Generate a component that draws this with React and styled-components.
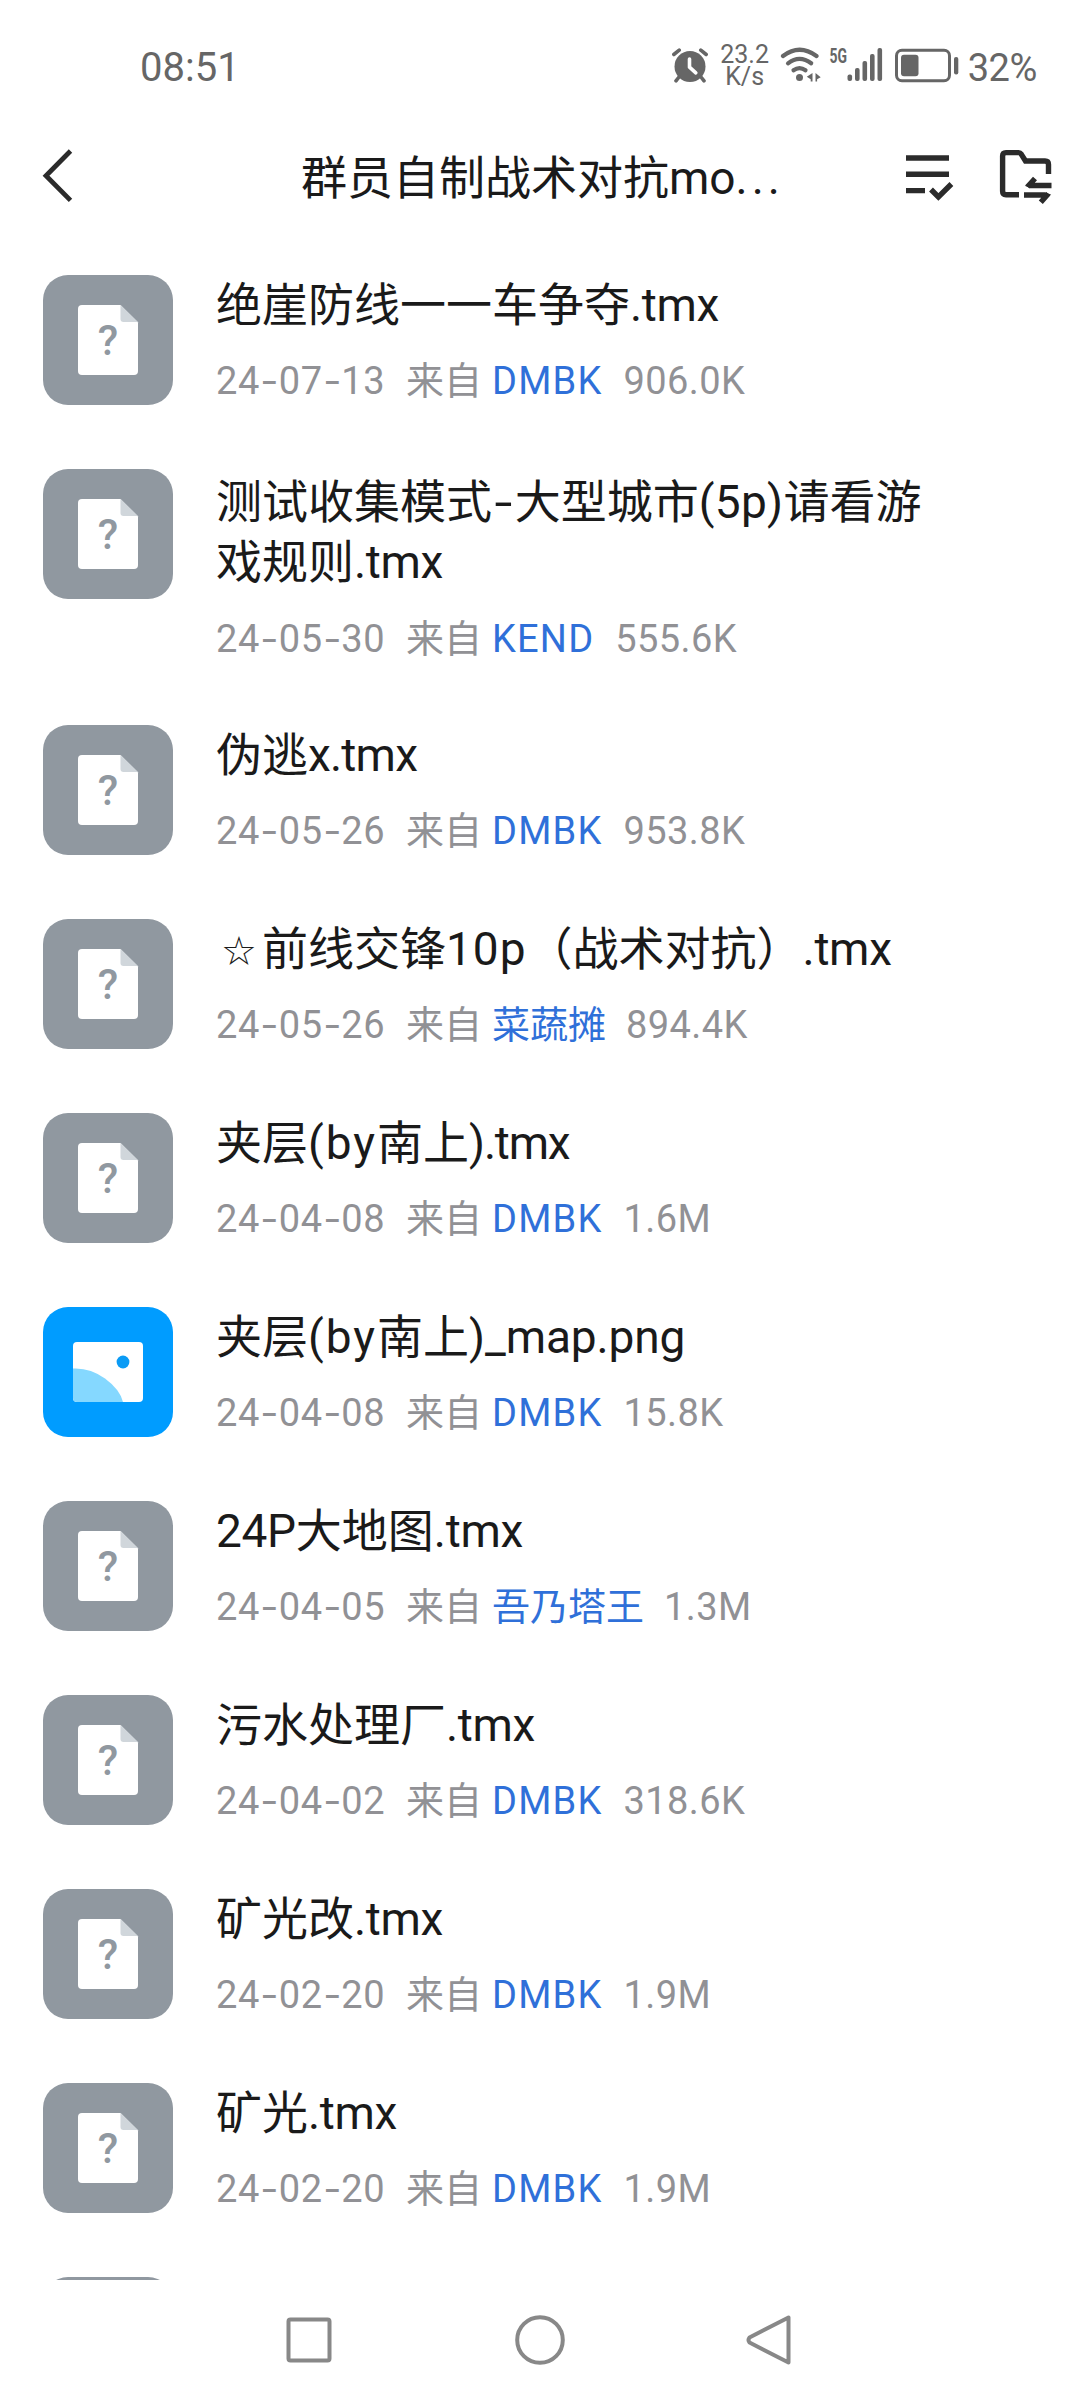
import React from 'react';
import styled, { createGlobalStyle } from 'styled-components';

const GlobalStyle = createGlobalStyle`
	* {
		box-sizing: border-box;
	}
	body {
		margin: 0;
		background: #fff;
		font-family: Roboto, 'Noto Sans CJK SC', sans-serif;
	}
`;

const Screen = styled.div`
	width: 1080px;
	height: 2400px;
	display: flex;
	flex-direction: column;
	overflow: hidden;
	background: #fff;
`;

const StatusBar = styled.div`
	height: 131px;
	display: flex;
	align-items: flex-start;
	justify-content: space-between;
	padding: 43px 43px 0 140px;
	color: #666;
`;

const Clock = styled.div`
	font-size: 40px;
	line-height: 50px;
`;

const StatusIcons = styled.div`
	display: flex;
	align-items: flex-start;
	height: 48px;
`;

const NetSpeed = styled.div`
	width: 50px;
	margin: 1px 10px 0 12px;
	font-size: 25px;
	line-height: 22px;
	text-align: center;
`;

const Percent = styled.div`
	margin-left: 9px;
	font-size: 38px;
	line-height: 50px;
	letter-spacing: -0.4px;
`;

const Header = styled.div`
	height: 113px;
	display: flex;
	align-items: flex-start;
	padding: 12px 27px 0 36px;
`;

const HeaderTitle = styled.h1`
	flex: 1;
	margin: 5px 0 0;
	padding-left: 221px;
	font-size: 46px;
	line-height: 60px;
	font-weight: 400;
	color: #1a1a1a;
	white-space: nowrap;
`;

const Ellipsis = styled.span`
	letter-spacing: 4px;
`;

const HeaderActions = styled.div`
	display: flex;
	gap: 34px;
`;

const List = styled.div`
	flex: 0 0 2036px;
	overflow: hidden;
`;

const Row = styled.div`
	display: flex;
	align-items: flex-start;
	height: ${(p) => (p.$wrapped ? 256 : 194)}px;
	padding: 31px 43px 0;
`;

const RowBody = styled.div`
	width: 724px;
	margin-left: 43px;
	padding-top: ${(p) => (p.$wrapped ? 3 : 0)}px;
`;

const FileName = styled.div`
	font-size: 46px;
	line-height: 60px;
	color: #1a1a1a;
`;

const Latin = styled.span`
	letter-spacing: ${(p) => p.$track || 0}px;
`;

const Star = styled.span`
	display: inline-block;
	width: 46px;
	font-family: 'DejaVu Sans', sans-serif;
	font-size: 40px;
	line-height: 1;
	text-align: center;
`;

const Meta = styled.div`
	display: flex;
	margin-top: ${(p) => (p.$wrapped ? 21 : 20)}px;
	font-size: 38px;
	line-height: 52px;
	color: #919195;
	white-space: nowrap;
`;

const FileDate = styled.span`
	width: 190px;
	letter-spacing: 0.7px;
`;

const Dash = styled.span`
	display: inline-block;
	margin: 0 ${(p) => p.$gap}px;
	letter-spacing: 0;
	transform: scaleX(1.4);
`;

const Author = styled.span`
	margin: 0 ${(p) => (p.$latin ? 21 : 20)}px 0 10px;
	color: #2f70d9;
	letter-spacing: ${(p) => (p.$latin ? 1.2 : 0)}px;
`;

const FileSize = styled.span`
	letter-spacing: 0.4px;
`;

const NavBar = styled.div`
	flex: 1;
	display: flex;
	justify-content: center;
	align-items: center;
	gap: 171px;
`;

const files = [
	{ name: ['绝崖防线一一车争夺', '.tmx'], date: '24-07-13', author: 'DMBK', size: '906.0K' },
	{
		name: ['测试收集模式', '-', '大型城市', '(5p)', '请看游戏规则', '.tmx'],
		date: '24-05-30',
		author: 'KEND',
		size: '555.6K',
		wrapped: true,
	},
	{ name: ['伪逃', 'x.tmx'], date: '24-05-26', author: 'DMBK', size: '953.8K' },
	{
		name: ['☆', '前线交锋', '10p', '（战术对抗）', '.tmx'],
		date: '24-05-26',
		author: '菜蔬摊',
		size: '894.4K',
	},
	{ name: ['夹层', '(by', '南上', ').tmx'], date: '24-04-08', author: 'DMBK', size: '1.6M' },
	{
		name: ['夹层', '(by', '南上', ')_map.png'],
		date: '24-04-08',
		author: 'DMBK',
		size: '15.8K',
		type: 'image',
	},
	{ name: ['24P', '大地图', '.tmx'], date: '24-04-05', author: '吾乃塔王', size: '1.3M' },
	{ name: ['污水处理厂', '.tmx'], date: '24-04-02', author: 'DMBK', size: '318.6K' },
	{ name: ['矿光改', '.tmx'], date: '24-02-20', author: 'DMBK', size: '1.9M' },
	{ name: ['矿光', '.tmx'], date: '24-02-20', author: 'DMBK', size: '1.9M' },
];

// extra tracking for the latin parts of a file name
const tracking = {
	'.tmx': -0.3,
	'x.tmx': -0.8,
	'(5p)': 0.3,
	'(by': 2,
	'10p': 1,
	'24P': -0.3,
	').tmx': -1.2,
	')_map.png': -0.1,
};

const isLatin = (text) => /^[\x20-\x7e]+$/.test(text);

const AlarmIcon = () => (
	<svg width="36" height="48" viewBox="672 43 36 48" fill="#666">
		<circle cx="690" cy="66.5" r="15.5" />
		<path
			d="M673.8 54.5l5.4-4.3M706.2 54.5l-5.4-4.3M679 77l-3 3.8M701 77l3 3.8"
			stroke="#666"
			strokeWidth="3.6"
			strokeLinecap="round"
		/>
		<path
			d="M689.5 59v8.2l6.3 5.6"
			fill="none"
			stroke="#fff"
			strokeWidth="3.6"
			strokeLinecap="round"
			strokeLinejoin="round"
		/>
	</svg>
);

const WifiIcon = () => (
	<svg width="48" height="48" viewBox="780 43 48 48" fill="#666">
		<g fill="none" stroke="#666" strokeWidth="4.2" strokeLinecap="round">
			<path d="M783 56Q799.5 43.5 816.5 56" />
			<path d="M788 63.3Q799.5 54.5 811.2 63.3" />
			<path d="M793.5 70.3Q799.5 66 805.5 70.3" />
		</g>
		<circle cx="799.5" cy="77.5" r="3.5" />
		<path d="M812.5 73v8.5h-1.8v-2.2l-3.9-2.6zM815.5 73l5.2 4.2-3.6 2.1v2.2h-1.6z" />
	</svg>
);

const SignalIcon = () => (
	<svg width="56" height="48" viewBox="828 43 56 48" fill="#666">
		<text
			x="829.5"
			y="63"
			fontFamily="Roboto, sans-serif"
			fontSize="20"
			fontWeight="700"
			textLength="17.5"
			lengthAdjust="spacingAndGlyphs"
		>
			5G
		</text>
		<rect x="847.5" y="74.5" width="4.6" height="6.5" rx="2" />
		<rect x="855" y="68" width="4.6" height="13" rx="2" />
		<rect x="862.5" y="61" width="4.6" height="20" rx="2" />
		<rect x="870" y="54" width="4.6" height="27" rx="2" />
		<rect x="877.5" y="48" width="4.6" height="33" rx="2" />
	</svg>
);

const BatteryIcon = () => (
	<svg width="75" height="48" viewBox="884 43 75 48" fill="#666">
		<rect x="896.5" y="50.3" width="53" height="30.4" rx="5.5" fill="none" stroke="#666" strokeWidth="3" />
		<rect x="901" y="54.7" width="17.5" height="21.6" rx="3" />
		<rect x="954" y="57" width="4.3" height="17.5" rx="2" />
	</svg>
);

const BackIcon = () => (
	<svg width="44" height="66" viewBox="36 143 44 66" fill="none" stroke="#2b2b2b" strokeWidth="4.8">
		<path d="M70.5 151L46 175.7l24.5 24.7" />
	</svg>
);

const SelectIcon = () => (
	<svg width="50" height="66" viewBox="904 143 50 66" fill="none" stroke="#2b2b2b" strokeWidth="5.4">
		<path d="M906 158h43M906 174.3h43M906 190.6h19M931 189.5l7.4 7.5 13-13" />
	</svg>
);

const FolderIcon = () => (
	<svg width="65" height="66" viewBox="988 143 65 66" fill="none" stroke="#2b2b2b" strokeWidth="5.4">
		<path d="M1019 194.7h-13q-3.4 0-3.4-3.4v-35.2q0-3.5 3.4-3.5h12.6q1.6 0 2.6 1.5l4.3 6.9h19.5q3.5 0 3.5 3.5v9.5" />
		<path d="M1051.5 185.5h-21.7M1027.5 186.8l7.5-8.3M1024 195h21.7M1048.3 193.7l-7.5 8.5" />
		<path d="M1024.8 185.8l5 2.3v-5zM1051.2 194.7l-5-2.3v5z" fill="#2b2b2b" stroke="none" />
	</svg>
);

const UnknownFileIcon = () => (
	<svg width="130" height="130" viewBox="0 0 130 130">
		<rect width="130" height="130" rx="25" fill="#9098a0" />
		<path d="M39 30h38.5L95 47.5V96q0 4-4 4H39q-4 0-4-4V34q0-4 4-4z" fill="#fff" />
		<path d="M77.5 30L95 47H80.5q-3 0-3-3z" fill="#d0d6db" />
		<text
			x="65"
			y="80"
			textAnchor="middle"
			fontFamily="Roboto, sans-serif"
			fontSize="42"
			fontWeight="500"
			fill="#9098a0"
		>
			?
		</text>
	</svg>
);

const ImageFileIcon = () => (
	<svg width="130" height="130" viewBox="0 0 130 130">
		<rect width="130" height="130" rx="25" fill="#009cff" />
		<rect x="30" y="35" width="70" height="60" rx="4" fill="#fff" />
		<path d="M30 61.5Q47 60.5 62 71.5T80 95H34q-4 0-4-4z" fill="#85d8ff" />
		<circle cx="80" cy="55" r="6.4" fill="#0a9bf5" />
	</svg>
);

function FileRow({ file }) {
	const dateParts = file.date.split('-');
	return (
		<Row $wrapped={file.wrapped}>
			{file.type === 'image' ? <ImageFileIcon /> : <UnknownFileIcon />}
			<RowBody $wrapped={file.wrapped}>
				<FileName>
					{file.name.map((part, i) => {
						if (part === '-') {
							return <Dash $gap={5} key={i}>-</Dash>;
						}
						if (part === '☆') {
							return <Star key={i}>{part}</Star>;
						}
						if (isLatin(part)) {
							return <Latin $track={tracking[part]} key={i}>{part}</Latin>;
						}
						return part;
					})}
				</FileName>
				<Meta $wrapped={file.wrapped}>
					<FileDate>
						{dateParts.map((part, i) => (
							<React.Fragment key={i}>
								{i > 0 && <Dash $gap={4}>-</Dash>}
								{part}
							</React.Fragment>
						))}
					</FileDate>
					<span>来自</span>
					<Author $latin={isLatin(file.author)}>{file.author}</Author>
					<FileSize>{file.size}</FileSize>
				</Meta>
			</RowBody>
		</Row>
	);
}

export default function App() {
	return (
		<Screen>
			<GlobalStyle />
			<StatusBar>
				<Clock>08:51</Clock>
				<StatusIcons>
					<AlarmIcon />
					<NetSpeed>
						23.2
						<br />
						K/s
					</NetSpeed>
					<WifiIcon />
					<SignalIcon />
					<BatteryIcon />
					<Percent>32%</Percent>
				</StatusIcons>
			</StatusBar>
			<Header>
				<BackIcon />
				<HeaderTitle>
					群员自制战术对抗mo<Ellipsis>...</Ellipsis>
				</HeaderTitle>
				<HeaderActions>
					<SelectIcon />
					<FolderIcon />
				</HeaderActions>
			</Header>
			<List>
				{files.map((file, i) => (
					<FileRow file={file} key={i} />
				))}
				{/* next row, cut off by the navigation bar */}
				<Row>
					<UnknownFileIcon />
				</Row>
			</List>
			<NavBar>
				<svg width="60" height="60" viewBox="-30 -30 60 60" fill="none" stroke="#888" strokeWidth="4">
					<rect x="-20.5" y="-20.5" width="41" height="41" rx="2" />
				</svg>
				<svg width="60" height="60" viewBox="-30 -30 60 60" fill="none" stroke="#888" strokeWidth="4">
					<circle r="22.8" />
				</svg>
				<svg width="60" height="60" viewBox="-30 -30 60 60" fill="none" stroke="#888" strokeWidth="4" strokeLinejoin="round">
					<path d="M17.5-22.5v45L-21.5 2.5Q-23.5 0-21.5-2.5z" />
				</svg>
			</NavBar>
		</Screen>
	);
}
